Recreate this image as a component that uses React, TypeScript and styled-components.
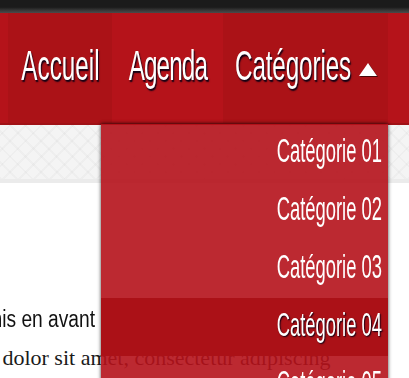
import React from "react";
import styled, { createGlobalStyle } from "styled-components";

const Global = createGlobalStyle`
  html, body { margin: 0; padding: 0; overflow: hidden; background: #fff; }
  body { font-family: "Liberation Sans", Arial, sans-serif; }
`;

const Page = styled.div`
  width: 409px;
  height: 378px;
  overflow: hidden;
  position: relative;
`;

const TopBar = styled.div`
  height: 13px;
  background: linear-gradient(#1b1b1b 0, #1b1b1b 55%, #333 75%, #4a4a4a 100%);
`;

const Nav = styled.nav`
  height: 110px;
  background: #b5131a;
  border-bottom: 2px solid #a01116;
  display: flex;
  justify-content: flex-end;
  align-items: stretch;
  padding-right: 21px;
  position: relative;
  z-index: 2;
`;

const NavItem = styled.div<{ $active?: boolean; $pl: number; $pr: number }>`
  position: relative;
  display: flex;
  align-items: center;
  padding: 0 ${(p) => p.$pr}px 4px ${(p) => p.$pl}px;
  background: ${(p) => (p.$active ? "#ab1217" : "transparent")};
  color: #fff;
`;

const NavLabel = styled.span<{ $ls?: number }>`
  display: inline-block;
  font-size: 24.3px;
  line-height: 1;
  letter-spacing: ${(p) => p.$ls ?? 0}px;
  transform: scaleY(1.76);
  text-shadow: 1px 1px 1px rgba(10, 0, 20, 0.95);
  white-space: nowrap;
`;

const Caret = styled.span`
  display: inline-block;
  width: 0;
  height: 0;
  margin-left: 8px;
  margin-top: 6px;
  border-left: 9px solid transparent;
  border-right: 9px solid transparent;
  border-bottom: 13px solid #fff;
  filter: drop-shadow(1px 1px 0.5px rgba(0, 0, 0, 0.6));
`;

const Dropdown = styled.div`
  position: absolute;
  top: calc(100% + 1px);
  right: 0;
  width: 287px;
  display: flex;
  flex-direction: column;
  box-shadow: 0 -1px 3px rgba(0, 0, 0, 0.35), 0 0 4px rgba(0, 0, 0, 0.45);
`;

const DropItem = styled.div<{ $active?: boolean }>`
  height: 58px;
  display: flex;
  align-items: center;
  justify-content: flex-end;
  padding: 0 6px 3px 0;
  box-sizing: border-box;
  background: ${(p) => (p.$active ? "#ab1117" : "rgba(181, 18, 27, 0.9)")};
  color: #fff;
`;

const DropLabel = styled.span<{ $active?: boolean }>`
  display: inline-block;
  font-size: 18.4px;
  line-height: 1;
  transform: scaleY(1.8);
  white-space: nowrap;
  text-shadow: ${(p) => (p.$active ? "1px 1px 1px rgba(10,0,20,0.95)" : "none")};
`;

const Band = styled.div`
  height: 54px;
  border-bottom: 4px solid #ebebeb;
  background-color: #f4f4f4;
  background-image: repeating-linear-gradient(45deg, rgba(0, 0, 0, 0.025) 0 2px, transparent 2px 11px),
    repeating-linear-gradient(-45deg, rgba(0, 0, 0, 0.025) 0 2px, transparent 2px 11px);
`;

const Content = styled.div`
  padding-top: 124px;
  margin-left: -121px;
`;

const Heading = styled.h2`
  margin: 0 0 12px 39px;
  font-family: "Liberation Sans", Arial, sans-serif;
  font-weight: normal;
  font-size: 19.2px;
  line-height: 24px;
  color: #111;
  white-space: nowrap;
  transform: scaleY(1.28);
`;

const Para = styled.p`
  margin: 0;
  width: 470px;
  font-family: "Liberation Serif", "Times New Roman", serif;
  font-size: 22px;
  line-height: 30px;
  color: #1a1a1a;
`;

const categories = ["Catégorie 01", "Catégorie 02", "Catégorie 03", "Catégorie 04", "Catégorie 05", "Catégorie 06"];

export default function App() {
  return (
    <Page>
      <Global />
      <TopBar />
      <Nav>
        <NavItem $active $pl={13} $pr={12}>
          <NavLabel>Accueil</NavLabel>
        </NavItem>
        <NavItem $pl={17} $pr={16}>
          <NavLabel $ls={-0.9}>Agenda</NavLabel>
        </NavItem>
        <NavItem $active $pl={12} $pr={11}>
          <NavLabel $ls={-0.15}>Catégories</NavLabel>
          <Caret />
          <Dropdown>
            {categories.map((c, i) => (
              <DropItem key={c} $active={i === 3}>
                <DropLabel $active={i === 3}>{c}</DropLabel>
              </DropItem>
            ))}
          </Dropdown>
        </NavItem>
      </Nav>
      <Band />
      <Content>
        <Heading>Articles mis en avant</Heading>
        <Para>Lorem ipsum dolor sit amet, consectetur adipiscing elit, sed do eiusmod tempor.</Para>
      </Content>
    </Page>
  );
}
